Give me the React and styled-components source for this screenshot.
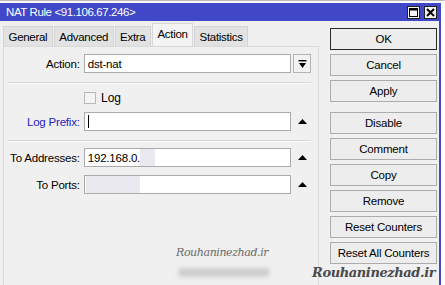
import React from "react";
import styled, { createGlobalStyle } from "styled-components";

const Global = createGlobalStyle`
  html, body {
    margin: 0;
    padding: 0;
    background: #ffffff;
    font-family: "Liberation Sans", Arial, sans-serif;
    font-size: 11px;
    color: #000;
  }
`;

const Page = styled.div`
  width: 445px;
  height: 285px;
  overflow: hidden;
  display: flex;
  flex-direction: column;
  position: relative;
`;

const TopStrip = styled.div`
  height: 3px;
  background: #fafafa;
  border-top: 1px solid #bbb;
  box-sizing: border-box;
`;

const Window = styled.div`
  width: 441px;
  flex: 1;
  display: flex;
  flex-direction: column;
  background: #f0f0f0;
  border-right: 2px solid #4048c8;
  box-sizing: border-box;
`;

const TitleBar = styled.div`
  height: 18px;
  background: #4048c8;
  display: flex;
  align-items: center;
  padding: 0 2px 0 6px;
  color: #fff;
  font-size: 11.5px;
`;

const Title = styled.span`
  flex: 1;
  letter-spacing: -0.4px;
`;

const TitleButton = styled.div`
  width: 11px;
  height: 11px;
  background: #f4f4f4;
  border: 1px solid #222;
  margin-left: 4px;
  display: flex;
  align-items: center;
  justify-content: center;
`;

const Main = styled.div`
  flex: 1;
  display: flex;
  min-height: 0;
`;

const LeftCol = styled.div`
  width: 316px;
  margin-left: 3px;
  display: flex;
  flex-direction: column;
`;

const Tabs = styled.div`
  height: 25px;
  display: flex;
  align-items: flex-end;
`;

const Tab = styled.div`
  height: ${(p) => (p.$active ? "23px" : "20px")};
  padding: 0 4.5px;
  margin-right: 1px;
  display: flex;
  align-items: center;
  padding-bottom: ${(p) => (p.$active ? "3px" : "0")};
  box-sizing: border-box;
  background: ${(p) => (p.$active ? "#f4f4f4" : "#e2e2e2")};
  border: 1px solid ${(p) => (p.$active ? "#d8d8d8" : "#d4d4d4")};
  border-bottom: none;
  font-size: 11.5px;
  letter-spacing: -0.3px;
`;

const Panel = styled.div`
  flex: 1;
  background: #f0f0f0;
  border: 1px solid #d9d9d9;
  border-bottom: none;
  display: flex;
  flex-direction: column;
  padding-right: 7px;
`;

const Row = styled.div`
  display: flex;
  align-items: center;
  height: ${(p) => p.$h || 19}px;
  margin-top: ${(p) => p.$mt}px;
`;

const Label = styled.div`
  width: 76px;
  margin-right: 4px;
  text-align: right;
  white-space: nowrap;
  color: ${(p) => (p.$blue ? "#2222c4" : "#000")};
  font-size: 11.5px;
  letter-spacing: -0.2px;
`;

const Field = styled.div`
  width: 208px;
  height: 19px;
  box-sizing: border-box;
  background: #fff;
  border: 1px solid #ababab;
  display: flex;
  align-items: center;
  padding-left: 3px;
  font-size: 11.5px;
  letter-spacing: -0.2px;
`;

const Caret = styled.span`
  width: 1px;
  height: 13px;
  background: #000;
`;

const Hidden = styled.span`
  display: inline-block;
  height: 17px;
  width: ${(p) => p.$w}px;
  margin-left: ${(p) => p.$ml || 0}px;
  background: #e9e9ef;
  filter: blur(0.6px);
`;

const Side = styled.div`
  width: 18px;
  height: 19px;
  margin-left: 2px;
  box-sizing: border-box;
  display: flex;
  align-items: center;
  justify-content: center;
  background: ${(p) => (p.$button ? "#f2f2f2" : "transparent")};
  border: ${(p) => (p.$button ? "1px solid #b4b4b4" : "none")};
`;

const Separator = styled.div`
  margin: ${(p) => p.$mt}px 0 0 4px;
  height: 1px;
  background: #d6d6d6;
  border-bottom: 1px solid #fbfbfb;
`;

const Check = styled.div`
  width: 12px;
  height: 12px;
  margin-left: 80px;
  box-sizing: border-box;
  border: 1px solid #b8b8b8;
  background: #f4f4f4;
`;

const CheckText = styled.span`
  margin-left: 5px;
  font-size: 12px;
`;

const ButtonCol = styled.div`
  width: 107px;
  margin-left: 11px;
  padding-top: 7px;
  display: flex;
  flex-direction: column;
  gap: 4px;
`;

const Button = styled.div`
  height: 22px;
  box-sizing: border-box;
  border: 1px solid ${(p) => (p.$default ? "#2a2a2a" : "#acacac")};
  background: #ededed;
  display: flex;
  align-items: center;
  justify-content: center;
  font-size: 11.5px;
  letter-spacing: -0.2px;
  margin-top: ${(p) => p.$mt || 0}px;
`;

const Watermark = styled.div`
  position: absolute;
  left: ${(p) => p.$x}px;
  top: ${(p) => p.$y}px;
  font-family: "DejaVu Serif", "Liberation Serif", serif;
  font-style: italic;
  font-weight: ${(p) => (p.$bold ? 700 : 400)};
  font-size: ${(p) => p.$size}px;
  color: ${(p) => p.$color};
  letter-spacing: -0.4px;
  white-space: nowrap;
`;

const Smudge = styled.div`
  position: absolute;
  left: 178px;
  top: 268px;
  width: 92px;
  height: 9px;
  background: #cdcdcd;
  border-radius: 5px;
  filter: blur(2px);
`;

const UpArrow = () => (
  <svg width="9" height="5" viewBox="0 0 9 5">
    <polygon points="0,5 9,5 4.5,0" fill="#000" />
  </svg>
);

const DropArrow = () => (
  <svg width="9" height="8" viewBox="0 0 9 8">
    <rect x="0.5" y="0" width="8" height="1.4" fill="#000" />
    <polygon points="1,3 8,3 4.5,8" fill="#000" />
  </svg>
);

const MaxIcon = () => (
  <svg width="9" height="9" viewBox="0 0 9 9">
    <rect x="0.5" y="0.5" width="8" height="8" fill="none" stroke="#000" />
    <rect x="0" y="0" width="9" height="2.5" fill="#000" />
  </svg>
);

const CloseIcon = () => (
  <svg width="9" height="9" viewBox="0 0 9 9">
    <path d="M1 1 L8 8 M8 1 L1 8" stroke="#000" strokeWidth="2" />
  </svg>
);

const tabs = ["General", "Advanced", "Extra", "Action", "Statistics"];

const buttons = [
  { label: "OK", def: true },
  { label: "Cancel" },
  { label: "Apply" },
  { label: "Disable", mt: 6 },
  { label: "Comment" },
  { label: "Copy" },
  { label: "Remove" },
  { label: "Reset Counters" },
  { label: "Reset All Counters" },
];

export default function App() {
  return (
    <Page>
      <Global />
      <TopStrip />
      <Window>
        <TitleBar>
          <Title>NAT Rule &lt;91.106.67.246&gt;</Title>
          <TitleButton>
            <MaxIcon />
          </TitleButton>
          <TitleButton>
            <CloseIcon />
          </TitleButton>
        </TitleBar>
        <Main>
          <LeftCol>
            <Tabs>
              {tabs.map((t) => (
                <Tab key={t} $active={t === "Action"}>
                  {t}
                </Tab>
              ))}
            </Tabs>
            <Panel>
              <Row $mt={7}>
                <Label>Action:</Label>
                <Field>dst-nat</Field>
                <Side $button>
                  <DropArrow />
                </Side>
              </Row>
              <Separator $mt={9} />
              <Row $mt={7} $h={13}>
                <Check />
                <CheckText>Log</CheckText>
              </Row>
              <Row $mt={8}>
                <Label $blue>Log Prefix:</Label>
                <Field>
                  <Caret />
                </Field>
                <Side>
                  <UpArrow />
                </Side>
              </Row>
              <Separator $mt={9} />
              <Row $mt={6}>
                <Label>To Addresses:</Label>
                <Field>
                  192.168.0.
                  <Hidden $w={15} />
                </Field>
                <Side>
                  <UpArrow />
                </Side>
              </Row>
              <Row $mt={8}>
                <Label>To Ports:</Label>
                <Field>
                  <Hidden $w={54} $ml={-2} />
                </Field>
                <Side>
                  <UpArrow />
                </Side>
              </Row>
            </Panel>
          </LeftCol>
          <ButtonCol>
            {buttons.map((b) => (
              <Button key={b.label} $default={b.def} $mt={b.mt}>
                {b.label}
              </Button>
            ))}
          </ButtonCol>
        </Main>
      </Window>
      <Watermark $x={176} $y={246} $size={11} $color="#6a6a6a">
        Rouhaninezhad.ir
      </Watermark>
      <Smudge />
      <Watermark $x={312} $y={265} $size={13} $bold $color="#4a4a4a">
        Rouhaninezhad.ir
      </Watermark>
    </Page>
  );
}
